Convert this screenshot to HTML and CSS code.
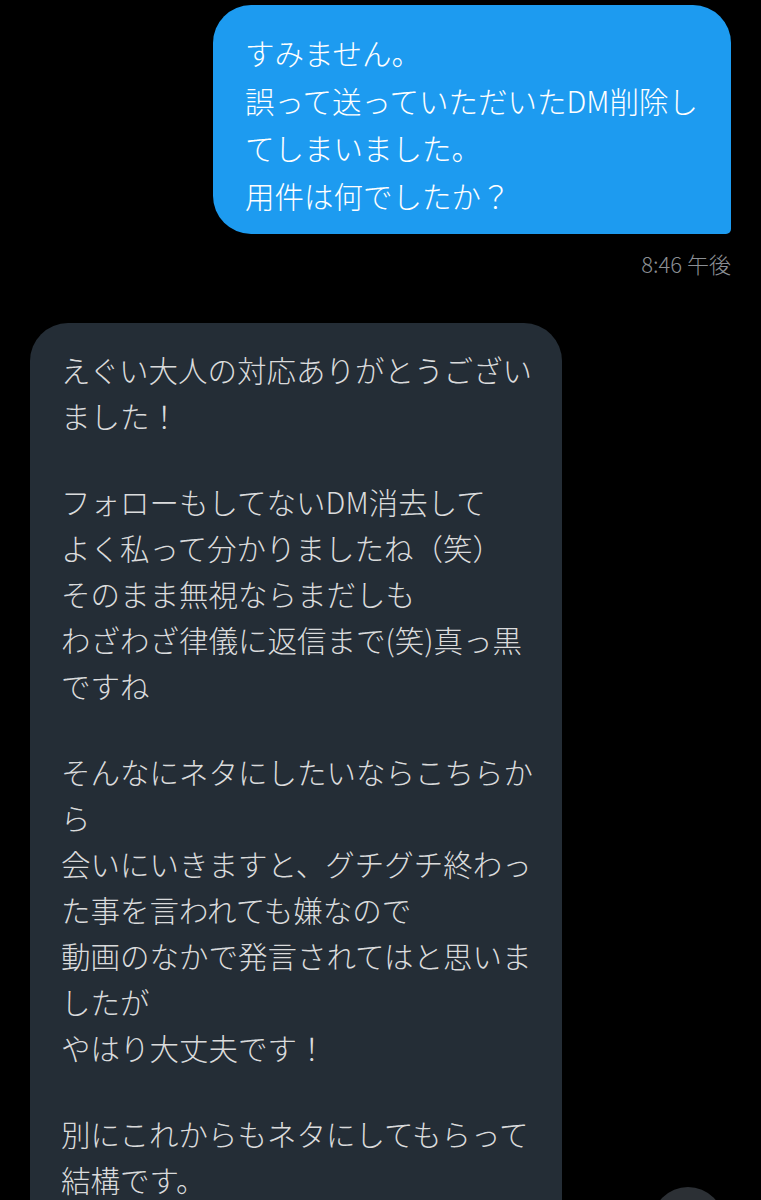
FILE: index.html
```html
<!DOCTYPE html>
<html lang="ja">
<head>
  <meta charset="UTF-8" />
  <meta name="viewport" content="width=device-width, initial-scale=1.0"/>
  <title>メッセージ</title>
  <link rel="stylesheet" href="styles.css">
</head>
<body>
  <div class="thread">
    <div class="msg sent">
      <div class="bubble blue">
        <p>すみません。<br>誤って送っていただいたDM削除してしまいました。<br>用件は何でしたか？</p>
      </div>
      <div class="time">8:46 午後</div>
    </div>

    <div class="msg received">
      <div class="bubble dark">
        <p>えぐい大人の対応ありがとうございました！</p>
        <p>フォローもしてないDM消去して<br>よく私って分かりましたね（笑）<br>そのまま無視ならまだしも<br>わざわざ律儀に返信まで(笑)真っ黒ですね</p>
        <p>そんなにネタにしたいならこちらから<br>会いにいきますと、グチグチ終わった事を言われても嫌なので<br>動画のなかで発言されてはと思いましたが<br>やはり大丈夫です！</p>
        <p>別にこれからもネタにしてもらって結構です。</p>
      </div>
    </div>
  </div>

  <div class="scroll-btn"></div>
</body>
</html>
```

FILE: styles.css
```css
body {
  margin: 0;
  background: #000;
  font-family: "Noto Sans CJK JP", "Noto Sans", sans-serif;
  height: 1200px;
  overflow: hidden;
  position: relative;
}

.thread {
  display: flex;
  flex-direction: column;
}

.msg {
  display: flex;
  flex-direction: column;
}

.sent {
  align-items: flex-end;
  padding: 5px 30px 0 0;
}

.received {
  align-items: flex-start;
  padding: 46px 0 0 30px;
}

.bubble p {
  margin: 0;
  font-size: 29.5px;
  font-weight: 300;
}

.blue {
  width: 462px;
  padding: 24px 24px 15px 32px;
  background: #1d9bf0;
  color: #fff;
  border-radius: 38px 38px 5px 38px;
}

.blue p {
  line-height: 47.5px;
}

.time {
  margin-top: 15px;
  font-size: 22px;
  line-height: 28px;
  color: #8b8f94;
  font-weight: 300;
}

.dark {
  width: 476px;
  padding: 23px 25px 40px 31px;
  background: #242d36;
  color: #dadbdc;
  border-radius: 38px 38px 38px 5px;
}

.dark p {
  line-height: 46px;
}

.dark p + p {
  margin-top: 40px;
}

.scroll-btn {
  position: absolute;
  left: 652px;
  top: 1187px;
  width: 72px;
  height: 72px;
  border-radius: 50%;
  background: #2c3035;
}
```
